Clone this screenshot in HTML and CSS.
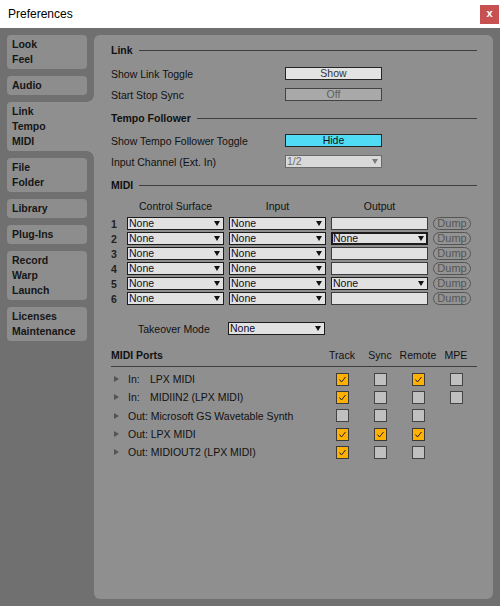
FILE: index.html
```html
<!DOCTYPE html>
<html>
<head>
<meta charset="utf-8">
<title>Preferences</title>
<link rel="stylesheet" href="styles.css">
</head>
<body>
<div class="titlebar">
  <span class="title">Preferences</span>
  <span class="close">x</span>
</div>
<div class="window">
  <ul class="tabs">
    <li>Look<br>Feel</li>
    <li>Audio</li>
    <li class="active">Link<br>Tempo<br>MIDI</li>
    <li>File<br>Folder</li>
    <li>Library</li>
    <li>Plug-Ins</li>
    <li>Record<br>Warp<br>Launch</li>
    <li>Licenses<br>Maintenance</li>
  </ul>

  <div class="panel">
    <!-- Link -->
    <div class="section">Link</div>
    <div class="row">
      <span class="label">Show Link Toggle</span>
      <span class="btn">Show</span>
    </div>
    <div class="row">
      <span class="label">Start Stop Sync</span>
      <span class="btn off">Off</span>
    </div>

    <!-- Tempo Follower -->
    <div class="section s-tempo">Tempo Follower</div>
    <div class="row r-tempo">
      <span class="label">Show Tempo Follower Toggle</span>
      <span class="btn on">Hide</span>
    </div>
    <div class="row">
      <span class="label">Input Channel (Ext. In)</span>
      <span class="sel disabled"><span>1/2</span></span>
    </div>

    <!-- MIDI -->
    <div class="section">MIDI</div>
    <div class="midi-grid">
      <span></span>
      <span class="colhead">Control Surface</span>
      <span class="colhead">Input</span>
      <span class="colhead">Output</span>
      <span></span>

      <span class="num">1</span>
      <span class="sel"><span>None</span></span>
      <span class="sel"><span>None</span></span>
      <span class="box"></span>
      <span class="dump">Dump</span>

      <span class="num">2</span>
      <span class="sel"><span>None</span></span>
      <span class="sel"><span>None</span></span>
      <span class="sel focus"><span>None</span></span>
      <span class="dump">Dump</span>

      <span class="num">3</span>
      <span class="sel"><span>None</span></span>
      <span class="sel"><span>None</span></span>
      <span class="box"></span>
      <span class="dump">Dump</span>

      <span class="num">4</span>
      <span class="sel"><span>None</span></span>
      <span class="sel"><span>None</span></span>
      <span class="box"></span>
      <span class="dump">Dump</span>

      <span class="num">5</span>
      <span class="sel"><span>None</span></span>
      <span class="sel"><span>None</span></span>
      <span class="sel"><span>None</span></span>
      <span class="dump">Dump</span>

      <span class="num">6</span>
      <span class="sel"><span>None</span></span>
      <span class="sel"><span>None</span></span>
      <span class="box"></span>
      <span class="dump">Dump</span>
    </div>

    <div class="row takeover">
      <span class="label">Takeover Mode</span>
      <span class="sel"><span>None</span></span>
    </div>

    <!-- MIDI Ports -->
    <div class="ports-head">
      <span class="ports-title">MIDI Ports</span>
      <span>Track</span>
      <span>Sync</span>
      <span>Remote</span>
      <span>MPE</span>
    </div>

    <div class="port">
      <span class="name"><i class="tri"></i><span class="dir">In:</span>LPX MIDI</span>
      <span class="cb checked"><svg viewBox="0 0 11 11"><path d="M2.5 5.5 L4.5 8 L8.5 3"/></svg></span>
      <span class="cb"></span>
      <span class="cb checked"><svg viewBox="0 0 11 11"><path d="M2.5 5.5 L4.5 8 L8.5 3"/></svg></span>
      <span class="cb"></span>
    </div>
    <div class="port">
      <span class="name"><i class="tri"></i><span class="dir">In:</span>MIDIIN2 (LPX MIDI)</span>
      <span class="cb checked"><svg viewBox="0 0 11 11"><path d="M2.5 5.5 L4.5 8 L8.5 3"/></svg></span>
      <span class="cb"></span>
      <span class="cb"></span>
      <span class="cb"></span>
    </div>
    <div class="port">
      <span class="name"><i class="tri"></i>Out: Microsoft GS Wavetable Synth</span>
      <span class="cb"></span>
      <span class="cb"></span>
      <span class="cb"></span>
      <span></span>
    </div>
    <div class="port">
      <span class="name"><i class="tri"></i>Out: LPX MIDI</span>
      <span class="cb checked"><svg viewBox="0 0 11 11"><path d="M2.5 5.5 L4.5 8 L8.5 3"/></svg></span>
      <span class="cb checked"><svg viewBox="0 0 11 11"><path d="M2.5 5.5 L4.5 8 L8.5 3"/></svg></span>
      <span class="cb checked"><svg viewBox="0 0 11 11"><path d="M2.5 5.5 L4.5 8 L8.5 3"/></svg></span>
      <span></span>
    </div>
    <div class="port">
      <span class="name"><i class="tri"></i>Out: MIDIOUT2 (LPX MIDI)</span>
      <span class="cb checked"><svg viewBox="0 0 11 11"><path d="M2.5 5.5 L4.5 8 L8.5 3"/></svg></span>
      <span class="cb"></span>
      <span class="cb"></span>
      <span></span>
    </div>
  </div>
</div>
</body>
</html>
```

FILE: styles.css
```css
html, body {
  margin: 0;
  padding: 0;
  height: 100%;
  background: #707070;
  font-family: "Liberation Sans", Arial, sans-serif;
  font-size: 10.5px;
  color: #111;
}

/* window title bar */
.titlebar {
  height: 28px;
  background: #fff;
  display: flex;
  align-items: center;
  justify-content: space-between;
}
.title {
  padding-left: 8px;
  font-size: 12px;
  color: #000;
}
.close {
  width: 19px;
  height: 19px;
  margin: 0 1px 0 0;
  background: #c75050;
  color: #fff;
  font-size: 11px;
  font-weight: bold;
  line-height: 17px;
  text-align: center;
}

.window {
  display: flex;
  gap: 7px;
  height: 578px;
  box-sizing: border-box;
  padding: 7px 7px 7px 7px;
}

/* left tab column */
.tabs {
  list-style: none;
  margin: 0;
  padding: 0;
  width: 80px;
  display: flex;
  flex-direction: column;
  gap: 7px;
}
.tabs li {
  background: #8d8d8d;
  border-radius: 4px;
  padding: 2px 0 2px 5px;
  line-height: 15px;
  font-weight: bold;
  color: #161616;
}
.tabs li.active {
  position: relative;
  margin-right: -7px;
  border-radius: 4px 0 0 4px;
  background: #8f8f8f;
}
.tabs li.active::before,
.tabs li.active::after {
  content: "";
  position: absolute;
  right: 0;
  width: 7px;
  height: 7px;
}
.tabs li.active::before {
  top: -7px;
  background: radial-gradient(circle at 0 0, transparent 6.5px, #8f8f8f 7px);
}
.tabs li.active::after {
  bottom: -7px;
  background: radial-gradient(circle at 0 100%, transparent 6.5px, #8f8f8f 7px);
}

/* right settings panel */
.panel {
  flex: 1;
  background: #8f8f8f;
  border-radius: 6px;
  padding: 7px 16px 0 17px;
}

.section {
  display: flex;
  align-items: center;
  gap: 6px;
  height: 16px;
  margin-top: 5px;
  font-weight: bold;
}
.section:first-child { margin-top: 0; }
.section::after {
  content: "";
  flex: 1;
  height: 1px;
  background: #3e3e3e;
}
.section + .row { margin-top: 5px; }
.s-tempo { margin-top: 5px; }
.s-tempo + .row { margin-top: 4px; }

.row {
  display: flex;
  align-items: center;
  height: 21px;
}
.label {
  width: 174px;
}

.btn {
  width: 95px;
  height: 11px;
  border: 1px solid #262626;
  background: #e3e3e3;
  color: #333;
  line-height: 11px;
  text-align: center;
}
.btn.off {
  background: #a9a9a9;
  border-color: #444;
  color: #5e5e5e;
}
.btn.on {
  background: #50dcf4;
  color: #111;
}

/* drop-down chooser */
.sel {
  display: flex;
  align-items: center;
  justify-content: space-between;
  box-sizing: border-box;
  width: 97px;
  height: 13px;
  padding: 0 3px 0 1px;
  border: 1px solid #1c1c1c;
  background: #e1e1e1;
  color: #0e0e26;
  line-height: 11px;
}
.sel::after {
  content: "";
  border-left: 3.5px solid transparent;
  border-right: 3.5px solid transparent;
  border-top: 5px solid #111;
}
.sel.disabled {
  border-color: #6a6a6a;
  background: #d9d9d9;
  color: #6c6c6c;
}
.sel.disabled::after { border-top-color: #7a7a7a; }
.sel.focus {
  border: 2px solid #1c1c1c;
  padding-left: 0;
  padding-right: 2px;
}

.midi-grid {
  display: grid;
  grid-template-columns: 11px 97px 97px 97px 38px;
  grid-template-rows: 18px;
  grid-auto-rows: 15px;
  column-gap: 5px;
  align-items: center;
  margin-top: 5px;
}
.midi-grid .colhead {
  text-align: center;
  align-self: start;
  line-height: 16px;
}
.num {
  font-weight: bold;
  color: #222;
}
.box {
  box-sizing: border-box;
  height: 13px;
  border: 1px solid #3c3c3c;
  background: #e1e1e1;
}
.dump {
  box-sizing: border-box;
  height: 13px;
  border: 1px solid #555;
  border-radius: 7px;
  background: #939393;
  color: #565656;
  font-size: 11px;
  line-height: 11px;
  text-align: center;
}

.takeover {
  margin-top: 12px;
}
.takeover .label {
  width: 90px;
  padding-left: 27px;
}

/* MIDI port list */
.ports-head {
  display: grid;
  grid-template-columns: 1fr repeat(4, 38px);
  height: 19px;
  margin-top: 8px;
  padding-right: 2px;
  border-bottom: 1px solid #3e3e3e;
  line-height: 16px;
}
.ports-head span { text-align: center; }
.ports-head .ports-title {
  text-align: left;
  font-weight: bold;
}
.ports-head + .port { margin-top: 3px; }

.port {
  display: grid;
  grid-template-columns: 1fr repeat(4, 38px);
  align-items: center;
  justify-items: center;
  height: 18.3px;
  padding-right: 2px;
}
.port .name {
  justify-self: start;
  display: flex;
  align-items: center;
}
.tri {
  width: 0;
  height: 0;
  margin: 0 9px 0 3px;
  border-top: 3.5px solid transparent;
  border-bottom: 3.5px solid transparent;
  border-left: 5px solid #555;
}
.dir {
  width: 22px;
}

.cb {
  box-sizing: border-box;
  width: 13px;
  height: 13px;
  border: 1px solid #444;
  background: #c0c0c0;
}
.cb.checked {
  border-color: #3a3a3a;
  background: #ffb000;
}
.cb svg {
  display: block;
  width: 11px;
  height: 11px;
}
.cb path {
  fill: none;
  stroke: #222;
  stroke-width: 1;
}
```
